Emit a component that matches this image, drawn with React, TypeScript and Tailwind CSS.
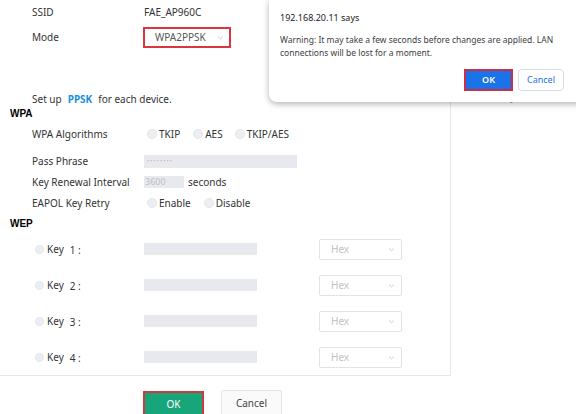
import React from 'react';

const font = { fontFamily: '"Noto Sans", "Liberation Sans", sans-serif' };

const Radio = () => (
  <span className="inline-block w-[10px] h-[10px] rounded-full bg-[#eceef2] border border-[#e4e6eb]" />
);

const Chevron = () => (
  <svg width="7" height="5" viewBox="0 0 7 5" className="text-[#c8c8c8]">
    <path d="M1 1.5 L3.5 3.8 L6 1.5" fill="none" stroke="currentColor" strokeWidth="0.9" />
  </svg>
);

const Row: React.FC<{ label: string; h: string; children?: React.ReactNode }> = ({ label, h, children }) => (
  <div className={`flex items-center ${h}`}>
    <div className="w-[112px] pl-[32px] box-content shrink-0">{label}</div>
    <div className="flex items-center">{children}</div>
  </div>
);

const KeyRow: React.FC<{ n: number }> = ({ n }) => (
  <div className="flex items-center h-[36px]">
    <div className="w-[109px] pl-[35px] box-content shrink-0 flex items-center">
      <span className="inline-block w-[9px] h-[9px] rounded-full bg-[#eceef2] border border-[#e4e6eb]" />
      <span className="ml-[3px]">Key</span>
      <span className="ml-[6px] mt-[3px]">{n} :</span>
    </div>
    <div className="w-[113px] h-[12px] bg-[#e8e9ee]" />
    <div className="ml-[62px] w-[83px] h-[21px] border border-[#e3e3e3] rounded-[2px] flex items-center justify-between pl-[11px] pr-[6px] text-[#c4c4c4]">
      <span>Hex</span>
      <Chevron />
    </div>
  </div>
);

export default function App() {
  return (
    <div className="relative w-[576px] h-[414px] overflow-hidden bg-white text-[10px] text-[#333]" style={font}>
      {/* page panel */}
      <div className="w-[451px] border-r border-b border-[#e8e8e8]">
        <Row label="SSID" h="h-[25px]">FAE_AP960C</Row>
        <Row label="Mode" h="h-[24px]">
          <div className="-ml-[1px] w-[88px] h-[21px] border-2 border-[#d9363e] flex items-center justify-between pl-[10px] pr-[5px] text-[#555]">
            <span>WPA2PPSK</span>
            <Chevron />
          </div>
        </Row>
        <div className="h-[42px]" />
        <div className="h-[16px] flex items-center pl-[32px]">
          Set up <span className="mx-[6px] text-[#1a8fdd] font-bold">PPSK</span> for each device.
        </div>
        <div className="h-[13px] flex items-center pl-[10px] font-bold text-black" style={{ fontFamily: '"Liberation Sans", sans-serif' }}>
          WPA
        </div>
        <Row label="WPA Algorithms" h="h-[28px]">
          <div className="flex items-center gap-[2px] ml-[3px]"><Radio /> TKIP</div>
          <div className="flex items-center gap-[2px] ml-[13px]"><Radio /> AES</div>
          <div className="flex items-center gap-[2px] ml-[12px]"><Radio /> TKIP/AES</div>
        </Row>
        <Row label="Pass Phrase" h="h-[26px]">
          <div className="w-[153px] h-[13px] bg-[#e8e9ee] flex items-center pl-[3px] text-[6px] text-[#bbb] tracking-[1px]">••••••••</div>
        </Row>
        <Row label="Key Renewal Interval" h="h-[16px]">
          <div className="w-[40px] h-[12px] bg-[#e8e9ee] flex items-center pl-[1px] text-[9px] text-[#c0c0c0]">3600</div>
          <span className="ml-[4px]">seconds</span>
        </Row>
        <Row label="EAPOL Key Retry" h="h-[26px]">
          <div className="flex items-center gap-[2px] ml-[3px]"><Radio /> Enable</div>
          <div className="flex items-center gap-[2px] ml-[13px]"><Radio /> Disable</div>
        </Row>
        <div className="h-[15px] flex items-center pl-[10px] font-bold text-black" style={{ fontFamily: '"Liberation Sans", sans-serif' }}>
          WEP
        </div>
        <KeyRow n={1} />
        <KeyRow n={2} />
        <KeyRow n={3} />
        <KeyRow n={4} />
      </div>

      {/* bottom buttons */}
      <div className="flex items-start pl-[143px] gap-[17px] mt-[15px]">
        <div className="w-[61px] h-[26px] border-2 border-[#d0393f] bg-[#17a57a] text-white flex items-center justify-center">OK</div>
        <div className="w-[61px] h-[26px] -mt-[1px] border border-[#e6e6e6] rounded-[2px] bg-[#fafafa] flex items-center justify-center text-[#444]">Cancel</div>
      </div>

      {/* table header behind dialog */}
      <div className="absolute left-[334px] top-[91px] text-[9px] text-[#888]">MAC</div>
      <div className="absolute left-[459px] top-[91px] text-[9px] text-[#888]">WPA/PSK Key</div>

      {/* browser alert */}
      <div className="absolute left-[269px] top-0 w-[320px] h-[102px] bg-white rounded-b-[8px] shadow-[0_2px_6px_rgba(0,0,0,0.3)] pl-[11px]">
        <div className="pt-[10px] text-[9px] text-[#202124] leading-[16px]">192.168.20.11 says</div>
        <div className="mt-[7px] text-[8.5px] leading-[13px] text-[#3c4043] w-[285px]">
          Warning: It may take a few seconds before changes are applied. LAN connections will be lost for a moment.
        </div>
        <div className="absolute top-[69px] left-[195px] flex gap-[5px]">
          <div className="w-[49px] h-[22px] border-2 border-[#cc2f45] bg-[#1a73e8] p-[1px]">
            <div className="w-full h-full bg-[#1a73e8] rounded-[2px] text-white text-[9px] font-semibold flex items-center justify-center">OK</div>
          </div>
          <div className="w-[46px] h-[22px] border border-[#dadce0] rounded-[4px] text-[#1a73e8] text-[9px] flex items-center justify-center">Cancel</div>
        </div>
      </div>
    </div>
  );
}
